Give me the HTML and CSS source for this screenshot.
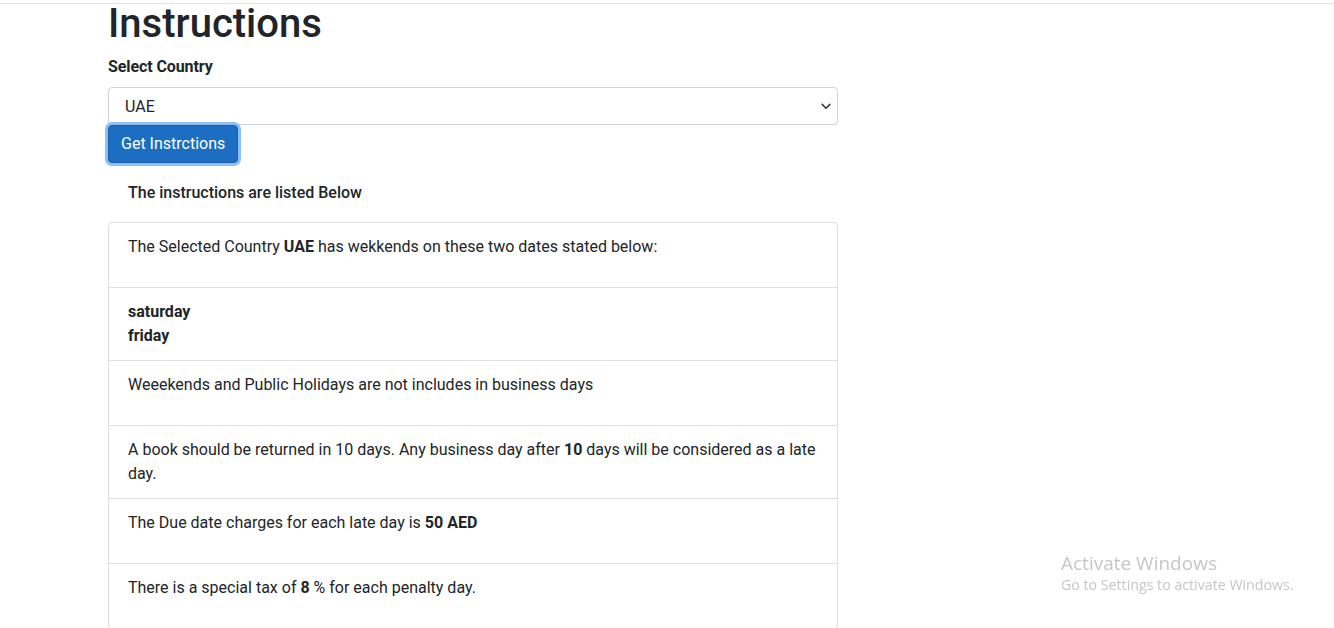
FILE: index.html
```html
<!DOCTYPE html>
<html lang="en">
<head>
<meta charset="utf-8">
<title>Instructions</title>
<link rel="stylesheet" href="styles.css">
</head>
<body>
<header class="topbar"></header>
<main class="container">
  <div class="col">
    <h1 class="title">Instructions</h1>
    <label class="field-label" for="country">Select Country</label>
    <div class="select-wrap">
      <select id="country" class="form-select">
        <option>UAE</option>
      </select>
      <svg class="chevron" width="10" height="7" viewBox="0 0 10 7"><path d="M1.2 1.4 5 5.2 8.8 1.4" fill="none" stroke="#343a40" stroke-width="1.6" stroke-linecap="round" stroke-linejoin="round"/></svg>
    </div>
    <button class="btn-primary" type="button">Get Instrctions</button>
    <p class="subhead">The instructions are listed Below</p>
    <ul class="list-group">
      <li class="item"><p class="para">The Selected Country <b>UAE</b> has wekkends on these two dates stated below:</p></li>
      <li class="item"><b>saturday</b><br><b>friday</b></li>
      <li class="item"><p class="para">Weeekends and Public Holidays are not includes in business days</p></li>
      <li class="item">A book should be returned in 10 days. Any business day after <b>10</b> days will be considered as a late day.</li>
      <li class="item"><p class="para">The Due date charges for each late day is <b>50 AED</b></p></li>
      <li class="item"><p class="para">There is a special tax of <b>8</b> % for each penalty day.</p></li>
    </ul>
  </div>
</main>
<div class="watermark">
  <div class="wm-title">Activate Windows</div>
  <div class="wm-sub">Go to Settings to activate Windows.</div>
</div>
</body>
</html>
```
FILE: styles.css
```css
* { box-sizing: border-box; }
html, body { margin: 0; padding: 0; background: #fff; }
body {
  font-family: Roboto, "Liberation Sans", sans-serif;
  font-size: 16px;
  line-height: 24px;
  color: #212529;
}
.topbar {
  height: 4px;
  border-bottom: 1px solid #e2e2e2;
}
.container {
  padding-left: 108px;
}
.col {
  width: 730px;
}
.title {
  margin: 0 0 11px;
  font-size: 40px;
  line-height: 40px;
  font-weight: 500;
  color: #212529;
}
.field-label {
  display: block;
  font-weight: 700;
  letter-spacing: -0.1px;
  margin-bottom: 8px;
}
.select-wrap {
  position: relative;
}
.form-select {
  display: block;
  width: 100%;
  height: 38px;
  margin: 0;
  padding: 6px 36px 6px 16px;
  font-family: inherit;
  font-size: 16px;
  color: #212529;
  background: #fff;
  border: 1px solid #ced4da;
  border-radius: 4px;
  -webkit-appearance: none;
  appearance: none;
}
.chevron {
  position: absolute;
  right: 7px;
  top: 16px;
}
.btn-primary {
  display: block;
  height: 38px;
  padding: 6px 12px;
  font-family: inherit;
  font-size: 16px;
  line-height: 24px;
  color: #fff;
  background: #1b6ec2;
  border: 1px solid #1861ac;
  border-radius: 4px;
  box-shadow: 0 0 0 3px #8fc0f5;
  position: relative;
}
.subhead {
  margin: 18px 0 17px 20px;
  font-weight: 500;
}
.list-group {
  list-style: none;
  margin: 0;
  padding: 0;
  border: 1px solid #dfdfdf;
  border-radius: 4px;
}
.item {
  padding: 12px 19px;
  border-top: 1px solid #dfdfdf;
}
.item:first-child { border-top: 0; }
.item b { font-weight: 700; }
.para { margin: 0 0 16px; }
.watermark {
  position: fixed;
  left: 1061px;
  top: 551px;
  font-family: "Open Sans", "Noto Sans", sans-serif;
  color: #c6c6c6;
}
.wm-title {
  font-size: 19px;
  line-height: 24px;
}
.wm-sub {
  font-size: 14.2px;
  line-height: 20px;
}
```
